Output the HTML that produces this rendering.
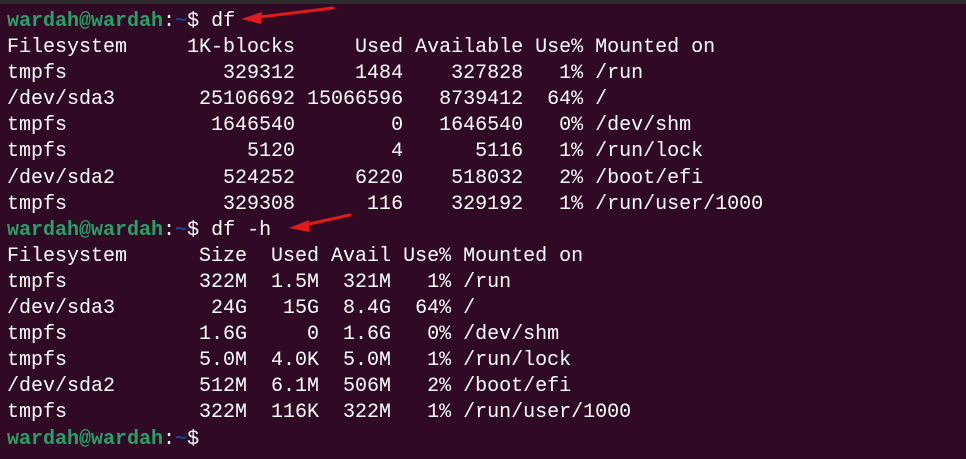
<!DOCTYPE html>
<html><head><style>
html,body{margin:0;padding:0;}
body{width:966px;height:459px;background:#300a24;overflow:hidden;position:relative;}
.top{position:absolute;left:0;top:0;width:966px;height:4px;background:#2c2c2c;}
pre{position:absolute;left:7px;top:9px;margin:0;font-family:"Liberation Mono",monospace;font-size:20px;line-height:26.1px;color:#ffffff;}
.g{color:#26a269;font-weight:bold;}
.b{color:#12488b;font-weight:bold;}
svg{position:absolute;left:0;top:0;}
</style></head><body>
<div class="top"></div>
<pre><span class="g">wardah@wardah</span>:<span class="b">~</span>$ df
Filesystem     1K-blocks     Used Available Use% Mounted on
tmpfs             329312     1484    327828   1% /run
/dev/sda3       25106692 15066596   8739412  64% /
tmpfs            1646540        0   1646540   0% /dev/shm
tmpfs               5120        4      5116   1% /run/lock
/dev/sda2         524252     6220    518032   2% /boot/efi
tmpfs             329308      116    329192   1% /run/user/1000
<span class="g">wardah@wardah</span>:<span class="b">~</span>$ df -h
Filesystem      Size  Used Avail Use% Mounted on
tmpfs           322M  1.5M  321M   1% /run
/dev/sda3        24G   15G  8.4G  64% /
tmpfs           1.6G     0  1.6G   0% /dev/shm
tmpfs           5.0M  4.0K  5.0M   1% /run/lock
/dev/sda2       512M  6.1M  506M   2% /boot/efi
tmpfs           322M  116K  322M   1% /run/user/1000
<span class="g">wardah@wardah</span>:<span class="b">~</span>$ </pre>
<svg width="966" height="459">
<line x1="333" y1="8" x2="252" y2="18" stroke="#e01b1b" stroke-width="3" stroke-linecap="round"/>
<polygon points="241,19 262,12 261,24" fill="#e01b1b"/>
<line x1="350" y1="215" x2="300" y2="226" stroke="#e01b1b" stroke-width="3" stroke-linecap="round"/>
<polygon points="289,228 309,220 309,232" fill="#e01b1b"/>
</svg>
</body></html>
